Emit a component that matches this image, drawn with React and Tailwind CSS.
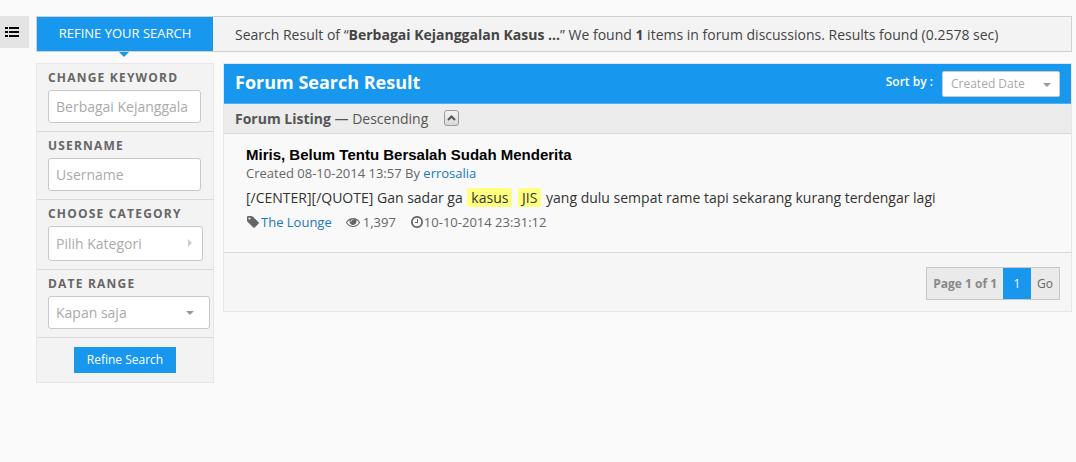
const results = [
  {
    title: 'Miris, Belum Tentu Bersalah Sudah Menderita',
    created: '08-10-2014 13:57',
    author: 'errosalia',
    forum: 'The Lounge',
    views: '1,397',
    lastPost: '10-10-2014 23:31:12',
    excerpt: [
      { text: '[/CENTER][/QUOTE] Gan sadar ga ' },
      { text: 'kasus', hit: true },
      { text: ' ' },
      { text: 'JIS', hit: true },
      { text: ' yang dulu sempat rame tapi sekarang kurang terdengar lagi' }
    ]
  }
];

const iconPaths = {
  tag: 'M576 448q0-53-37.5-90.5t-90.5-37.5-90.5 37.5-37.5 90.5 37.5 90.5 90.5 37.5 90.5-37.5 37.5-90.5zm1067 576q0 53-37 90l-491 492q-39 37-91 37-53 0-90-37l-715-716q-38-37-64.5-101t-26.5-117v-416q0-52 38-90t90-38h416q53 0 117 26.5t102 64.5l715 714q37 39 37 91z',
  eye: 'M1664 960q-152-236-381-353 61 104 61 225 0 185-131.5 316.5t-316.5 131.5-316.5-131.5-131.5-316.5q0-121 61-225-229 117-381 353 133 205 333.5 326.5t434.5 121.5 434.5-121.5 333.5-326.5zm-720-384q0-20-14-34t-34-14q-125 0-214.5 89.5t-89.5 214.5q0 20 14 34t34 14 34-14 14-34q0-86 61-147t147-61q20 0 34-14t14-34zm848 384q0 34-20 69-140 230-376.5 368.5t-499.5 138.5-499.5-139-376.5-368q-20-35-20-69t20-69q140-229 376.5-368t499.5-139 499.5 139 376.5 368q20 35 20 69z',
  clock: 'M1024 544v448q0 14-9 23t-23 9h-320q-14 0-23-9t-9-23v-64q0-14 9-23t23-9h224v-352q0-14 9-23t23-9h64q14 0 23 9t9 23zm416 352q0-148-73-273t-198-198-273-73-273 73-198 198-73 273 73 273 198 198 273 73 273-73 198-198 73-273zm224 0q0 209-103 385.5t-279.5 279.5-385.5 103-385.5-103-279.5-279.5-103-385.5 103-385.5 279.5-279.5 385.5-103 385.5 103 279.5 279.5 103 385.5z'
};

const Icon = ({ name }) => (
  <svg viewBox="0 0 1792 1792" className="w-[14px] h-[14px] shrink-0" fill="currentColor" aria-hidden="true">
    <path d={iconPaths[name]} />
  </svg>
);

const Caret = ({ className }) => (
  <svg viewBox="0 0 8 4" className={className} fill="currentColor" aria-hidden="true">
    <path d="M0 0h8L4 4z" />
  </svg>
);

const Field = ({ id, label, children }) => (
  <div className="px-[11px] pt-1 pb-2 border-b border-[#dadada]">
    <label htmlFor={id} className="block mb-0.5 text-[12px] leading-[20px] font-bold tracking-widest uppercase text-[#666]">
      {label}
    </label>
    {children}
  </div>
);

const fieldStyle = 'block bg-white border border-[#c8c8c8] rounded-[3px] pl-[7px] pr-[13px] text-[14px] text-[#aaa] placeholder:text-[#aaa] outline-none';

const Sidebar = () => (
  <form className="w-[178px] shrink-0 bg-[#f3f3f3] border border-[#e7e7e7]" onSubmit={(e) => e.preventDefault()}>
    <Field id="keyword" label="Change keyword">
      <input id="keyword" type="text" defaultValue="Berbagai Kejanggalan Kasus JIS" className={`${fieldStyle} w-[153px] h-[33px]`} />
    </Field>
    <Field id="username" label="Username">
      <input id="username" type="text" placeholder="Username" className={`${fieldStyle} w-[153px] h-[33px]`} />
    </Field>
    <Field id="category" label="Choose category">
      <div className="relative w-[155px]">
        <select id="category" className={`${fieldStyle} appearance-none w-full h-[35px]`}>
          <option>Pilih Kategori</option>
        </select>
        <svg viewBox="0 0 4 8" className="absolute right-[11px] top-[13px] w-[4px] h-[8px] text-[#ccc] pointer-events-none" fill="currentColor" aria-hidden="true">
          <path d="M0 0v8l4-4z" />
        </svg>
      </div>
    </Field>
    <Field id="range" label="Date range">
      <div className="relative w-[162px]">
        <select id="range" className={`${fieldStyle} appearance-none w-full h-[33px]`}>
          <option>Kapan saja</option>
        </select>
        <Caret className="absolute right-4 top-[15px] w-[8px] h-[4px] text-[#999] pointer-events-none" />
      </div>
    </Field>
    <div className="flex justify-center py-[9px]">
      <button type="submit" className="h-[26px] px-[13px] bg-[#1797ee] text-white text-[12px] font-medium">
        Refine Search
      </button>
    </div>
  </form>
);

const Result = ({ item }) => (
  <article className="px-[22px] pt-3 pb-[21px] bg-[#f9f9f9] border-b border-[#dadada]">
    <h3 className="font-['Liberation_Sans',Arial,sans-serif] text-[15px] leading-[18px] font-bold text-black">
      <a href="#thread">{item.title}</a>
    </h3>
    <p className="text-[13px] leading-[18px] text-[#666]">
      Created {item.created} By <a href="#author" className="text-[#1a78bc]">{item.author}</a>
    </p>
    <p className="mt-1 text-[14px] leading-[24px] text-[#333]">
      {item.excerpt.map((part, idx) =>
        part.hit ? (
          <mark key={idx} className="mx-px bg-[#ffff80] text-[#333] rounded-[3px] px-1">{part.text}</mark>
        ) : (
          <span key={idx}>{part.text}</span>
        )
      )}
    </p>
    <div className="flex items-center mt-[3px] text-[13px] leading-[18px] text-[#666]">
      <Icon name="tag" />
      <a href="#forum" className="ml-px text-[#1a78bc]">{item.forum}</a>
      <span className="flex items-center gap-[3px] ml-[14px]">
        <Icon name="eye" />
        {item.views}
      </span>
      <span className="flex items-center ml-[14px]">
        <Icon name="clock" />
        {item.lastPost}
      </span>
    </div>
  </article>
);

const ForumResults = () => (
  <section className="flex-1 min-w-0 bg-[#f6f6f6] border border-[#e7e7e7]">
    <div className="flex items-center justify-between h-[40px] px-[11px] bg-[#1797ee] border-b border-[#5aaee8] text-white">
      <h2 className="pb-0.5 text-[18px] font-bold">Forum Search Result</h2>
      <div className="flex items-center gap-[9px]">
        <label htmlFor="sort" className="pb-1 text-[12px] font-semibold">Sort by :</label>
        <div className="relative w-[118px]">
          <select id="sort" className="block appearance-none w-full h-[26px] px-2 bg-white border border-[#c8c8c8] rounded-[2px] text-[12px] text-[#aaa] outline-none">
            <option>Created Date</option>
          </select>
          <Caret className="absolute right-[9px] top-3 w-[8px] h-[4px] text-[#999] pointer-events-none" />
        </div>
      </div>
    </div>
    <div className="flex items-center h-[30px] px-[11px] bg-[#ececec] border-b border-[#dadada] text-[14px] text-[#555]">
      <p><strong>Forum Listing</strong> — Descending</p>
      <button aria-label="Change sort direction" className="flex items-center justify-center ml-4 mb-0.5 w-[15px] h-[16px] border border-[#999] rounded-[3px] bg-linear-to-b from-[#f4f4f4] to-[#d8d8d8]">
        <svg viewBox="0 0 9 6" className="w-[9px] h-[6px]" fill="none" stroke="#555" strokeWidth="2" aria-hidden="true">
          <path d="M1 5l3.500-3.500L8 5" />
        </svg>
      </button>
    </div>
    {results.map((item, idx) => (
      <Result key={idx} item={item} />
    ))}
    <div className="flex justify-end px-[11px] pt-[14px] pb-[11px]">
      <nav aria-label="Pagination" className="flex h-[33px] border border-[#c8c8c8] bg-[#eaeaea] text-[12px] leading-[31px] text-[#666]">
        <span className="px-[6px] font-bold text-[#888]">Page 1 of 1</span>
        <a href="#page-1" className="w-[28px] bg-[#1797ee] text-white text-center">1</a>
        <a href="#go" className="px-[6px]">Go</a>
      </nav>
    </div>
  </section>
);

const App = () => {
  return (
    <div className="min-h-screen flex items-start pt-4 pr-1 bg-[#fafafa] font-['Open_Sans',sans-serif]">
      <button aria-label="Open menu" className="flex items-center w-[29px] h-[32px] pl-[5px] bg-[#e4e4e4] text-black shrink-0">
        <svg viewBox="0 0 14 12" className="w-[14px] h-[12px]" fill="currentColor" aria-hidden="true">
          <path d="M0 1h3v2H0zM0 5h3v2H0zM0 9h3v2H0zM4 1h10v2H4zM4 5h10v2H4zM4 9h10v2H4z" />
        </svg>
      </button>
      <main className="flex-1 min-w-0 ml-[7px]">
        <header className="flex items-center h-[36px] border border-[#d0d0d0] bg-[#f3f3f3]">
          <div className="relative flex items-center justify-center w-[176px] h-full shrink-0 bg-[#1797ee] text-white text-[13px] uppercase">
            Refine your search
            <Caret className="absolute top-full left-[82px] mt-px w-[10px] h-[5px] text-[#1797ee]" />
          </div>
          <p className="pl-[22px] text-[14px] text-[#444]">
            Search Result of “<strong>Berbagai Kejanggalan Kasus ...</strong>” We found <strong>1</strong> items in forum discussions. Results found (0.2578 sec)
          </p>
        </header>
        <div className="flex items-start gap-[9px] mt-[11px]">
          <Sidebar />
          <ForumResults />
        </div>
      </main>
    </div>
  );
};

export default App;
